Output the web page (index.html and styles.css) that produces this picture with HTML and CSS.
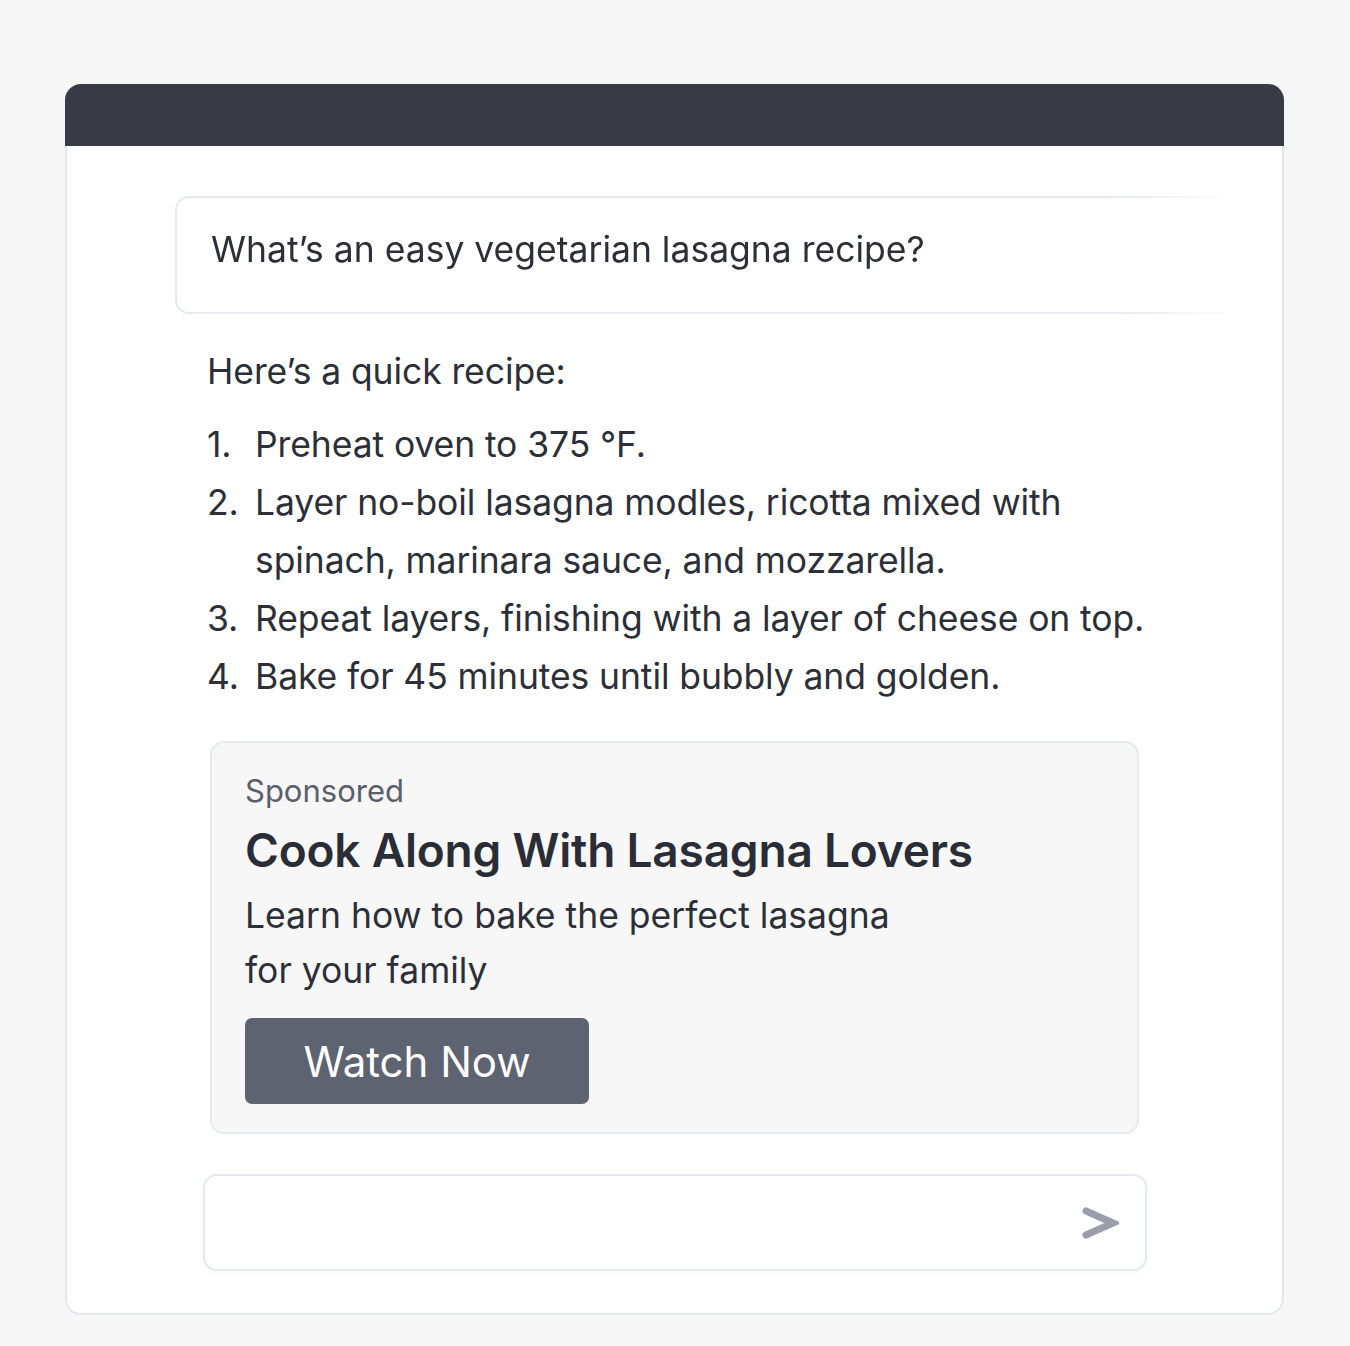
FILE: index.html
```html
<!DOCTYPE html>
<html lang="en">
<head>
  <meta charset="utf-8" />
  <title>Chat – lasagna recipe</title>
  <link rel="stylesheet" href="styles.css">
</head>
<body>
<div class="page">
  <div class="card">
    <div class="topbar"></div>

    <div class="chat">
      <div class="user-msg">What’s an easy vegetarian lasagna recipe?</div>

      <div class="reply">
        <p class="intro">Here’s a quick recipe:</p>
        <ol class="steps">
          <li><span class="num">1.</span><span>Preheat oven to 375 °F.</span></li>
          <li><span class="num">2.</span><span>Layer no-boil lasagna modles, ricotta mixed with spinach, marinara sauce, and mozzarella.</span></li>
          <li><span class="num">3.</span><span>Repeat layers, finishing with a layer of cheese on top.</span></li>
          <li><span class="num">4.</span><span>Bake for 45 minutes until bubbly and golden.</span></li>
        </ol>
      </div>

      <div class="ad">
        <div class="ad-label">Sponsored</div>
        <div class="ad-title">Cook Along With Lasagna Lovers</div>
        <div class="ad-text">Learn how to bake the perfect lasagna for your family</div>
        <button class="ad-btn">Watch Now</button>
      </div>

      <div class="composer">
        <svg class="send" width="38" height="34" viewBox="0 0 38 34">
          <polyline points="5,5 32,17 5,29" fill="none" stroke="#9a9ea8" stroke-width="7" stroke-linecap="round" stroke-linejoin="miter"/>
        </svg>
      </div>
    </div>
  </div>
</div>
</body>
</html>
```

FILE: styles.css
```css
html,body{margin:0;background:#f7f7f8;font-family:Inter,"Noto Sans",sans-serif;color:#2c2f37}
.page{padding:84px 66px 33px 65px}

.card{border-radius:16px}
.topbar{height:62px;background:#383a45;border-radius:16px 16px 0 0}

.chat{padding:50px 0 42px 136px;background:#fff;border:2px solid #e4e7eb;border-top:0;border-radius:0 0 16px 16px}

.user-msg{margin-left:-28px;width:990px;padding:30px 34px 40px;border:2px solid #e6e9ed;border-radius:14px;
          font-size:35.5px;line-height:44px;
          -webkit-mask-image:linear-gradient(to right,#000 88%,transparent);mask-image:linear-gradient(to right,#000 88%,transparent)}

.reply{margin-left:4px;font-size:35.5px;line-height:58px;letter-spacing:-0.1px}
.intro{margin:29px 0 15px}
.steps{list-style:none;margin:0;padding:0;width:948px}
.steps li{display:flex}
.num{flex:0 0 48px}

.ad{margin:35px 0 0 7px;width:859px;padding:30px 33px 28px;background:#f7f7f8;border:2px solid #e6e9ed;border-radius:14px}
.ad-label{font-size:31px;line-height:36px;color:#59606b}
.ad-title{margin-top:13px;font-size:46px;line-height:56px;font-weight:600;letter-spacing:-0.2px;color:#2a2d36}
.ad-text{margin-top:10px;max-width:670px;font-size:35.5px;line-height:55px}
.ad-btn{margin-top:20px;width:344px;height:86px;border:0;border-radius:7px;background:#5d6370;color:#fff;
        font-family:inherit;font-size:42px;padding:0}

.composer{margin:40px 0 0;width:914px;height:93px;border:2px solid #e6e9ed;border-radius:14px;background:#fff;
          box-shadow:0 2px 6px rgba(0,0,0,.04);display:flex;align-items:center;justify-content:flex-end;padding-right:26px}
.send{display:block}
```
